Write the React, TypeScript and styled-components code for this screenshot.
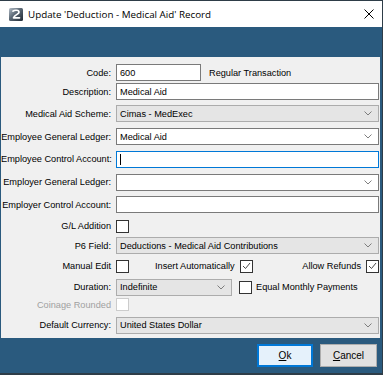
import React from "react";
import styled, { createGlobalStyle, css } from "styled-components";

const GlobalStyle = createGlobalStyle`
  html, body {
    margin: 0;
    padding: 0;
    background: #2e3d48;
  }
  * {
    box-sizing: border-box;
  }
`;

const Window = styled.div`
  width: 382px;
  height: 372px;
  margin-top: 1px;
  background: #2a5a7e;
  display: flex;
  flex-direction: column;
  font-family: "Liberation Sans", Arial, sans-serif;
  font-size: 9.2px;
  color: #000;
`;

const TitleBar = styled.div`
  height: 26px;
  background: #ffffff;
  display: flex;
  align-items: center;
  padding-left: 9px;
  padding-right: 8px;
`;

const TitleText = styled.span`
  margin-left: 5px;
  font-family: "Open Sans", "Noto Sans", sans-serif;
  font-size: 9.8px;
  color: #000;
`;

const CloseButton = styled.div`
  margin-left: auto;
  width: 10px;
  height: 10px;
  display: flex;
`;

const HeaderBand = styled.div`
  height: 30px;
`;

const Panel = styled.div`
  height: 281px;
  margin: 0 2px 0 1px;
  background: #f0f0f0;
  padding-top: 6px;
  display: flex;
  flex-direction: column;
`;

const Row = styled.div<{ $h: number }>`
  height: ${({ $h }) => $h}px;
  display: grid;
  grid-template-columns: 115px 1fr;
  align-items: center;
  padding-right: 1px;
`;

const Label = styled.div<{ $disabled?: boolean }>`
  text-align: right;
  padding-right: 5px;
  white-space: nowrap;
  color: ${({ $disabled }) => ($disabled ? "#a0a0a0" : "#000")};
`;

const Field = styled.div`
  display: flex;
  align-items: center;
  min-width: 0;
`;

const boxBase = css`
  height: 17px;
  display: flex;
  align-items: center;
  padding-left: 3px;
  white-space: nowrap;
`;

const TextBox = styled.div<{ $focused?: boolean; $w?: number }>`
  ${boxBase}
  flex: ${({ $w }) => ($w ? "none" : "1")};
  width: ${({ $w }) => ($w ? `${$w}px` : "auto")};
  background: #ffffff;
  border: 1px solid ${({ $focused }) => ($focused ? "#0078d7" : "#7a7a7a")};
`;

const Caret = styled.span`
  width: 1px;
  height: 11px;
  background: #000;
`;

const Combo = styled.div<{ $gray?: boolean; $w?: number }>`
  ${boxBase}
  flex: ${({ $w }) => ($w ? "none" : "1")};
  width: ${({ $w }) => ($w ? `${$w}px` : "auto")};
  padding-right: 6px;
  background: ${({ $gray }) => ($gray ? "#e5e5e5" : "#ffffff")};
  border: 1px solid ${({ $gray }) => ($gray ? "#acacac" : "#7a7a7a")};
`;

const ComboText = styled.span`
  flex: 1;
`;

const Box = styled.div<{ $disabled?: boolean }>`
  width: 13px;
  height: 13px;
  flex: none;
  background: #ffffff;
  border: 1px solid ${({ $disabled }) => ($disabled ? "#cccccc" : "#333333")};
  display: flex;
  align-items: center;
  justify-content: center;
`;

const InlineText = styled.span<{ $ml?: number; $mr?: number }>`
  margin-left: ${({ $ml }) => $ml ?? 0}px;
  margin-right: ${({ $mr }) => $mr ?? 0}px;
  white-space: nowrap;
`;

const Spacer = styled.div`
  flex: 1;
`;

const ButtonBar = styled.div`
  flex: 1;
  display: flex;
  justify-content: flex-end;
  align-items: flex-start;
  gap: 7px;
  padding: 6px 5px 0 0;
`;

const Button = styled.div<{ $primary?: boolean }>`
  width: ${({ $primary }) => ($primary ? 56 : 57)}px;
  height: 23px;
  display: flex;
  align-items: center;
  justify-content: center;
  font-size: 10px;
  background: ${({ $primary }) => ($primary ? "#e5f1fb" : "#e1e1e1")};
  border: ${({ $primary }) =>
    $primary ? "2px solid #0078d7" : "1px solid #adadad"};

  u {
    text-decoration-thickness: 1px;
    text-underline-offset: 1px;
  }
`;

const Chevron = () => (
  <svg width="8" height="5" viewBox="0 0 8 5">
    <polyline points="0.5,0.5 4,4 7.5,0.5" fill="none" stroke="#707070" strokeWidth="0.9" />
  </svg>
);

const Check = ({ checked, disabled }: { checked?: boolean; disabled?: boolean }) => (
  <Box $disabled={disabled}>
    {checked && (
      <svg width="9" height="8" viewBox="0 0 9 8">
        <polyline points="1,4 3.5,6.5 8,1" fill="none" stroke="#333" strokeWidth="0.9" />
      </svg>
    )}
  </Box>
);

const AppIcon = () => (
  <svg width="14" height="13" viewBox="0 0 14 13">
    <defs>
      <linearGradient id="ic" x1="0" y1="0" x2="1" y2="1">
        <stop offset="0" stopColor="#b4bec8" />
        <stop offset="0.45" stopColor="#5a6774" />
        <stop offset="1" stopColor="#1f2a35" />
      </linearGradient>
    </defs>
    <rect x="0" y="0" width="14" height="13" rx="1.5" fill="url(#ic)" />
    <path
      d="M4 3.2 C5.5 1.8 10 1.8 10 4.2 C10 6.2 6 6.4 4.5 9.8 L10.5 9.8"
      fill="none"
      stroke="#ffffff"
      strokeWidth="1.7"
      strokeLinecap="round"
      strokeLinejoin="round"
    />
  </svg>
);

const CloseIcon = () => (
  <svg width="10" height="10" viewBox="0 0 10 10">
    <path d="M0.5 0.5 L9.5 9.5 M9.5 0.5 L0.5 9.5" stroke="#000" strokeWidth="1" />
  </svg>
);

export default function App() {
  return (
    <>
      <GlobalStyle />
      <Window>
        <TitleBar>
          <AppIcon />
          <TitleText>Update 'Deduction - Medical Aid' Record</TitleText>
          <CloseButton>
            <CloseIcon />
          </CloseButton>
        </TitleBar>
        <HeaderBand />
        <Panel>
          <Row $h={19}>
            <Label>Code:</Label>
            <Field>
              <TextBox $w={85}>600</TextBox>
              <InlineText $ml={8}>Regular Transaction</InlineText>
            </Field>
          </Row>
          <Row $h={19}>
            <Label>Description:</Label>
            <Field>
              <TextBox>Medical Aid</TextBox>
            </Field>
          </Row>
          <Row $h={25}>
            <Label>Medical Aid Scheme:</Label>
            <Field>
              <Combo $gray>
                <ComboText>Cimas - MedExec</ComboText>
                <Chevron />
              </Combo>
            </Field>
          </Row>
          <Row $h={21}>
            <Label>Employee General Ledger:</Label>
            <Field>
              <Combo>
                <ComboText>Medical Aid</ComboText>
                <Chevron />
              </Combo>
            </Field>
          </Row>
          <Row $h={24}>
            <Label>Employee Control Account:</Label>
            <Field>
              <TextBox $focused>
                <Caret />
              </TextBox>
            </Field>
          </Row>
          <Row $h={22}>
            <Label>Employer General Ledger:</Label>
            <Field>
              <Combo>
                <ComboText />
                <Chevron />
              </Combo>
            </Field>
          </Row>
          <Row $h={23}>
            <Label>Employer Control Account:</Label>
            <Field>
              <TextBox />
            </Field>
          </Row>
          <Row $h={20}>
            <Label>G/L Addition</Label>
            <Field>
              <Check />
            </Field>
          </Row>
          <Row $h={19}>
            <Label>P6 Field:</Label>
            <Field>
              <Combo $gray>
                <ComboText>Deductions - Medical Aid Contributions</ComboText>
                <Chevron />
              </Combo>
            </Field>
          </Row>
          <Row $h={22}>
            <Label>Manual Edit</Label>
            <Field>
              <Check />
              <InlineText $ml={26} $mr={5}>
                Insert Automatically
              </InlineText>
              <Check checked />
              <Spacer />
              <InlineText $mr={5}>Allow Refunds</InlineText>
              <Check checked />
            </Field>
          </Row>
          <Row $h={20}>
            <Label>Duration:</Label>
            <Field>
              <Combo $gray $w={116}>
                <ComboText>Indefinite</ComboText>
                <Chevron />
              </Combo>
              <InlineText $ml={7} />
              <Check />
              <InlineText $ml={4}>Equal Monthly Payments</InlineText>
            </Field>
          </Row>
          <Row $h={15}>
            <Label $disabled>Coinage Rounded</Label>
            <Field>
              <Check disabled />
            </Field>
          </Row>
          <Row $h={26}>
            <Label>Default Currency:</Label>
            <Field>
              <Combo $gray>
                <ComboText>United States Dollar</ComboText>
                <Chevron />
              </Combo>
            </Field>
          </Row>
        </Panel>
        <ButtonBar>
          <Button $primary>
            <span>
              <u>O</u>k
            </span>
          </Button>
          <Button>
            <span>
              <u>C</u>ancel
            </span>
          </Button>
        </ButtonBar>
      </Window>
    </>
  );
}
